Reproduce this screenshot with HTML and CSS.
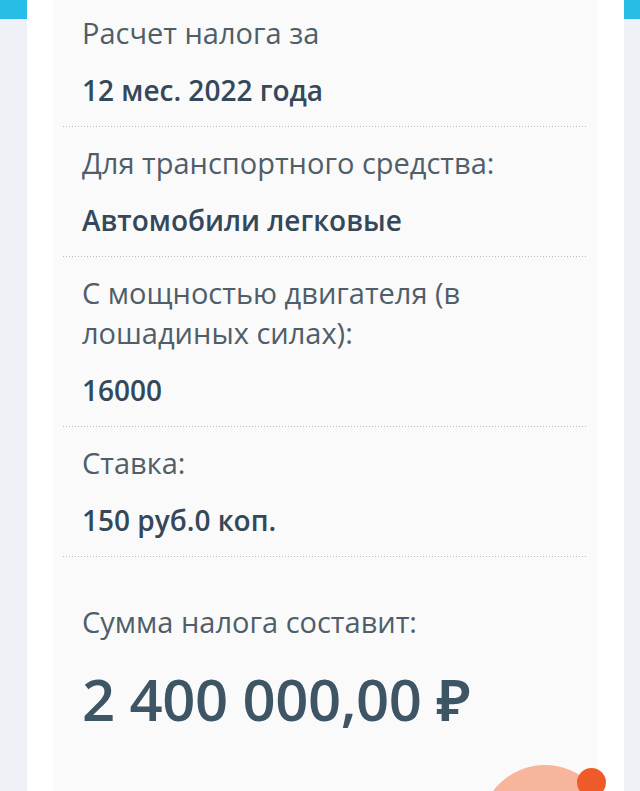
FILE: index.html
```html
<!DOCTYPE html>
<html lang="ru">
<head>
<meta charset="utf-8">
<title>Расчет налога</title>
<link rel="stylesheet" href="styles.css">
</head>
<body>
<div class="card">
  <div class="panel">
    <div class="row first">
      <div class="label">Расчет налога за</div>
      <div class="value">12 мес. 2022 года</div>
    </div>
    <div class="row">
      <div class="label">Для транспортного средства:</div>
      <div class="value">Автомобили легковые</div>
    </div>
    <div class="row">
      <div class="label">С мощностью двигателя (в лошадиных силах):</div>
      <div class="value">16000</div>
    </div>
    <div class="row">
      <div class="label">Ставка:</div>
      <div class="value">150 руб.0 коп.</div>
    </div>
    <div class="total">
      <div class="label">Сумма налога составит:</div>
      <div class="sum">2 400 000,00 ₽</div>
    </div>
  </div>
</div>
<div class="chat"></div>
<div class="chat-dot"></div>
</body>
</html>
```
FILE: styles.css
```css
html {
  overflow: hidden;
  height: 100%;
}
html, body {
  margin: 0;
  padding: 0;
}
body {
  position: relative;
  height: 100%;
  overflow: hidden;
  background: linear-gradient(to bottom, #27bde6 0, #27bde6 19px, #eef2f7 19px, #eef2f7 100%);
  font-family: "Open Sans", "Noto Sans", sans-serif;
  color: #4d5d68;
}
.card {
  margin: 0 16px 0 27px;
  height: 100%;
  background: #ffffff;
  padding: 0 27px 0 26px;
  box-sizing: border-box;
}
.panel {
  height: 100%;
  background: #fafafa;
  padding: 0 9px 0 10px;
  box-sizing: border-box;
}
.row {
  display: flex;
  flex-direction: column;
  gap: 17px;
  padding: 16px 0 17px 19px;
  background-image: linear-gradient(to right, #b9bcbf 0, #b9bcbf 1.5px, transparent 1.5px);
  background-size: 3px 1px;
  background-repeat: repeat-x;
  background-position: left bottom;
}
.row.first {
  padding-top: 13px;
  padding-bottom: 17px;
}
.label {
  font-size: 29px;
  line-height: 40px;
  font-weight: 400;
  color: #4f5e69;
}
.value {
  font-size: 28px;
  line-height: 40px;
  font-weight: 600;
  color: #34485a;
}
.total {
  display: flex;
  flex-direction: column;
  gap: 21px;
  padding: 45px 0 0 19px;
}
.sum {
  font-size: 58px;
  line-height: 72px;
  font-weight: 600;
  letter-spacing: -0.4px;
  color: #3e5565;
}
.chat {
  position: absolute;
  left: 480px;
  top: 765px;
  width: 130px;
  height: 130px;
  border-radius: 50%;
  background: #f7b59c;
}
.chat-dot {
  position: absolute;
  left: 577px;
  top: 768px;
  width: 29px;
  height: 29px;
  border-radius: 50%;
  background: #f05a28;
}
```
